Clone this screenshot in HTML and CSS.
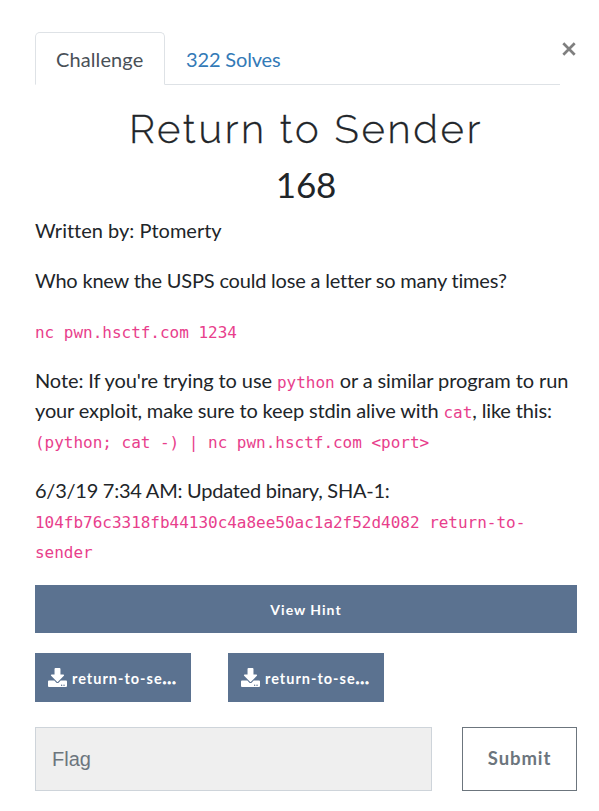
FILE: index.html
```html
<!DOCTYPE html>
<html lang="en">
<head>
<meta charset="utf-8">
<title>Return to Sender</title>
<link rel="stylesheet" href="styles.css">
</head>
<body>
<main class="modal">
  <header class="top">
    <nav class="tabs">
      <a class="tab active">Challenge</a>
      <a class="tab solves">322 Solves</a>
    </nav>
    <button class="close" aria-label="Close"><svg width="14" height="14" viewBox="0 0 14 14"><path d="M1.300 1.300 12.700 12.700M12.700 1.300 1.300 12.700"/></svg></button>
  </header>
  <h1 class="name">Return to Sender</h1>
  <h2 class="value">168</h2>
  <section class="desc">
    <p>Written by: Ptomerty</p>
    <p class="snug">Who knew the USPS could lose a letter so many times?</p>
    <p><code>nc pwn.hsctf.com 1234</code></p>
    <p class="note">Note: If you're trying to use <code>python</code> or a similar program to run<br><span class="tight">your exploit, make sure to keep stdin alive with <code>cat</code>, like this:</span><br><code>(python; cat -) | nc pwn.hsctf.com &lt;port&gt;</code></p>
    <p class="snug update">6/3/19 7:34 AM: Updated binary, SHA-1:<br><code>104fb76c3318fb44130c4a8ee50ac1a2f52d4082 return-to-<br>sender</code></p>
  </section>
  <button class="hint">View Hint</button>
  <div class="files">
    <a class="file"><svg viewBox="0 0 512 512"><path d="M200 0h112c13.300 0 24 10.700 24 24v152h77.700c17.800 0 26.700 21.500 14.100 34.100L269.700 368.300c-7.500 7.500-19.800 7.500-27.300 0L84.100 210.100c-12.600-12.600-3.700-34.100 14.100-34.100H176V24c0-13.300 10.700-24 24-24zm312 364v124c0 13.300-10.700 24-24 24H24c-13.300 0-24-10.700-24-24V364c0-13.300 10.700-24 24-24h146.700l49 49c20.100 20.100 52.500 20.100 72.600 0l49-49H488c13.300 0 24 10.700 24 24zm-124 100c0-11-9-20-20-20s-20 9-20 20 9 20 20 20 20-9 20-20zm64 0c0-11-9-20-20-20s-20 9-20 20 9 20 20 20 20-9 20-20z"/></svg><span>return-to-se<b>...</b></span></a>
    <a class="file"><svg viewBox="0 0 512 512"><path d="M200 0h112c13.300 0 24 10.700 24 24v152h77.700c17.800 0 26.700 21.500 14.100 34.100L269.700 368.300c-7.500 7.500-19.800 7.500-27.300 0L84.100 210.100c-12.600-12.600-3.700-34.100 14.100-34.100H176V24c0-13.300 10.700-24 24-24zm312 364v124c0 13.300-10.700 24-24 24H24c-13.300 0-24-10.700-24-24V364c0-13.300 10.700-24 24-24h146.700l49 49c20.100 20.100 52.500 20.100 72.600 0l49-49H488c13.300 0 24 10.700 24 24zm-124 100c0-11-9-20-20-20s-20 9-20 20 9 20 20 20 20-9 20-20zm64 0c0-11-9-20-20-20s-20 9-20 20 9 20 20 20 20-9 20-20z"/></svg><span>return-to-se<b>...</b></span></a>
  </div>
  <form class="answer">
    <input class="flag" type="text" placeholder="Flag">
    <button class="submit" type="button">Submit</button>
  </form>
</main>
</body>
</html>
```
FILE: styles.css
```css
* { box-sizing: border-box; }
body { margin: 0; background: #fff; color: #212529; font: 20px/30px Lato, sans-serif; font-variant-ligatures: none; }
.modal { padding: 32px 22px 0 35px; height: 811px; overflow: hidden; }
.top { display: flex; align-items: flex-start; }
.tabs { display: flex; width: 525px; height: 53px; border-bottom: 1px solid #dee2e6; }
.tab { height: 53px; padding: 11px 20px; border: 1px solid transparent; color: #337ab7; white-space: nowrap; }
.active { width: 130px; color: #495057; background: #fff; border-color: #dee2e6 #dee2e6 #fff; border-radius: 5px 5px 0 0; letter-spacing: 0.1px; }
.solves { letter-spacing: -0.15px; }
.close { display: flex; margin: 10px 0 0 1.5px; padding: 0; border: 0; background: none; }
.close svg { fill: none; stroke: #7f7f7f; stroke-width: 2.7; }
.name { margin: 20px 0 0; text-align: center; font: 300 40px/48px Raleway, sans-serif; letter-spacing: 2.75px; white-space: nowrap; -webkit-text-stroke: 0.3px #212529; }
.value { margin: 7px 0 0; text-align: center; font-weight: 400; font-size: 35px; line-height: 48px; letter-spacing: -0.2px; }
.desc { margin-top: 7px; }
.desc p { margin: 0 0 20px; white-space: nowrap; }
.desc .snug { letter-spacing: -0.2px; }
.desc .update { letter-spacing: -0.25px; }
.note { letter-spacing: -0.1px; }
.tight { letter-spacing: -0.14px; }
code { font: 16px/1 "DejaVu Sans Mono", monospace; letter-spacing: -0.02px; color: #e83e8c; }
.hint { display: block; width: 542px; height: 48px; padding: 0; border: 0; background: #5b7290; color: #fff; font: 700 14px Lato, sans-serif; letter-spacing: 1px; }
.files { display: flex; gap: 37px; margin-top: 20px; }
.file { display: flex; align-items: center; gap: 5px; width: 156px; height: 49px; padding: 0 13px; background: #5b7290; color: #fff; font-size: 14.500px; font-weight: 700; letter-spacing: 1px; white-space: nowrap; }
.file span { padding-top: 2px; }
.file b { font-weight: 900; letter-spacing: 1.3px; -webkit-text-stroke: 0.8px #fff; }
.file svg { width: 19px; height: 19px; fill: #fff; flex: none; }
.answer { display: flex; gap: 30px; margin: 25px 0 0; }
.flag { width: 397px; height: 64px; padding: 0 16px; border: 1px solid #ced4da; background: #efefef; font: 20px "Liberation Sans", sans-serif; }
.flag::placeholder { color: #6c757d; }
.submit { width: 115px; height: 64px; padding: 0 0 2px; border: 1px solid #6c757d; background: #fff; color: #6c757d; font: 700 18.500px Lato, sans-serif; letter-spacing: 0.9px; }
```
